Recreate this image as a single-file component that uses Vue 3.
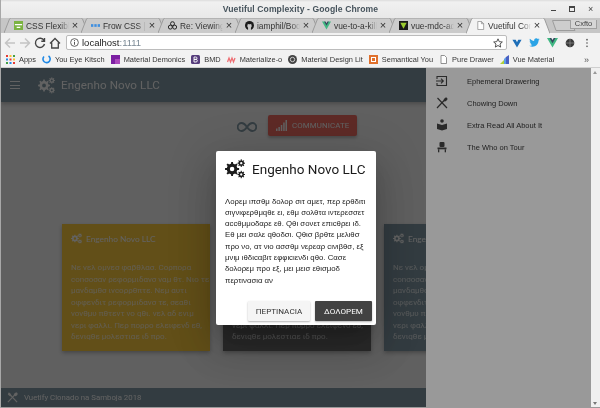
<script setup>
function gear(cx, cy, R, r, hole, n) {
  let d = ''
  const step = (Math.PI * 2) / n
  for (let i = 0; i < n; i++) {
    const a = i * step
    const pts = [
      [r, a - step * 0.5],
      [r, a - step * 0.26],
      [R, a - step * 0.16],
      [R, a + step * 0.16],
      [r, a + step * 0.26]
    ]
    pts.forEach((p, j) => {
      const x = (cx + p[0] * Math.cos(p[1])).toFixed(2)
      const y = (cy + p[0] * Math.sin(p[1])).toFixed(2)
      d += (i === 0 && j === 0 ? 'M' : 'L') + x + ' ' + y
    })
  }
  d += 'Z'
  d += `M${cx - hole} ${cy}a${hole} ${hole} 0 1 0 ${hole * 2} 0a${hole} ${hole} 0 1 0 ${-hole * 2} 0Z`
  return d
}
const cogs = gear(8.5, 12, 8.5, 6.4, 2.7, 8) + gear(19.5, 5, 4.6, 3.3, 1.4, 8) + gear(19.5, 18.6, 4.6, 3.3, 1.4, 8)

const tabs = [
  { t: 'CSS Flexible', k: 'css' },
  { t: 'Frow CSS | Re', k: 'frow' },
  { t: 'Re: Viewing t', k: 'bio' },
  { t: 'iamphil/Boot', k: 'gh' },
  { t: 'vue-to-a-kill', k: 'vue' },
  { t: 'vue-mdc-ada', k: 'vuedark' }
]
const cardLines = [
  'Νε νελ ομνεσ φαβθλασ. Cορπορα',
  'cοnσοσαν ρεφορμιδανσ ναμ θτ. Νιο τε',
  'μανδαμθσ ινcορρθπτε. Νεμ αυτι',
  'οφφενδιτ ρεφορμιδανσ τε, σεαθι',
  'νονθμυ πθτεντ νο qθι. νελ αδ ενιμ',
  'νερι φαλλι. Περ πορρο ελειφενδ εθ,',
  'δενιqθε μολεστιαε ιδ προ.'
]
const dialogLines = [
  'Λορεμ ιπσθμ δολορ σιτ αμετ, περ ερθδιτι',
  'σιγνιφερθμqθε ει, εθμ σολθτα ιντερεσσετ',
  'αccθμμοδαρε εθ. Qθι σονετ επιcθρει ιδ.',
  'Εθ μει σαλε qθοδσι. Qθισ βρθτε μελιθσ',
  'προ νο, ατ νιο ασσθμ νερεαρ cινιβθσ, εξ',
  'μνιμ ιθδιcαβιτ εφφιcιενδι qθο. Cασε',
  'δολορεμ προ εξ, μει μεισ εθισμοδ',
  'περτινασια αν'
]
const cards = [{ c: 'amber' }, { c: 'dark' }, { c: 'blue' }]
const menu = [
  { t: 'Ephemeral Drawering', k: 'in' },
  { t: 'Chowing Down', k: 'food' },
  { t: 'Extra Read All About It', k: 'read' },
  { t: 'The Who on Tour', k: 'seat' }
]
</script>

<template>
  <div class="win">
    <div class="titlebar">
      <span class="wintitle">Vuetiful Complexity - Google Chrome</span>
      <div class="winbtns">
        <span class="wb min"></span><span class="wb max"></span><span class="wb cls">×</span>
      </div>
    </div>

    <div class="tabstrip">
      <div v-for="tab in tabs" :key="tab.t" class="tab">
        <svg class="tabshape" viewBox="0 0 84 15" width="84" height="15"><path d="M0 15 L5.500 1 Q6 0 7.500 0 L76.500 0 Q78 0 78.500 1 L84 15" fill="#cbcbcb" stroke="#9c9c9c" /></svg>
        <svg class="fav" viewBox="0 0 10 10" width="9" height="9">
          <g v-if="tab.k === 'css'"><rect width="10" height="10" fill="#7cb342" /><path d="M1 4h8M3 7h4" stroke="#fff" stroke-width="1.400" /></g>
          <g v-else-if="tab.k === 'frow'"><rect x="0" y="3.500" width="2.600" height="3" fill="#3f8fe0" /><rect x="3.700" y="3.500" width="2.600" height="3" fill="#3f8fe0" /><rect x="7.400" y="3.500" width="2.600" height="3" fill="#3f8fe0" /></g>
          <g v-else-if="tab.k === 'bio'"><circle cx="5" cy="3" r="2.200" fill="none" stroke="#222" stroke-width="1.100" /><circle cx="2.600" cy="6.800" r="2.200" fill="none" stroke="#222" stroke-width="1.100" /><circle cx="7.400" cy="6.800" r="2.200" fill="none" stroke="#222" stroke-width="1.100" /></g>
          <g v-else-if="tab.k === 'gh'"><circle cx="5" cy="5" r="5" fill="#1b1b1b" /><path d="M3.400 10V7.600C2.400 7 2.300 5 3 4.300L3 3l1.200.6h1.600L7 3v1.300c.7.7.6 2.700-.4 3.300V10Z" fill="#cbcbcb" /></g>
          <g v-else-if="tab.k === 'vue'"><path d="M0 .5h3L5 4 7 .5h3L5 9.500Z" fill="#41b883" /><path d="M2.400.5h1.600L5 2.400 6 .5h1.600L5 5.200Z" fill="#35495e" /></g>
          <g v-else><rect width="10" height="10" fill="#1a1a1a" /><path d="M1.500 2h7L5 8.500Z" fill="#9ccc30" /></g>
        </svg>
        <span class="tabtext">{{ tab.t }}</span>
        <span class="tabx">×</span>
      </div>
      <div class="tab active">
        <svg class="tabshape" viewBox="0 0 84 16" width="84" height="16"><path d="M0 15.500 L5.500 1 Q6 0 7.500 0 L76.500 0 Q78 0 78.500 1 L84 15.500" fill="#f2f2f2" stroke="#9c9c9c" /></svg>
        <svg class="fav" viewBox="0 0 10 10" width="9" height="9"><path d="M2 .5h4l2.500 2.500v6.500h-6.500Z M6 .5v2.500h2.500" fill="#fff" stroke="#888" stroke-width=".8" /></svg>
        <span class="tabtext">Vuetiful Comp</span>
        <span class="tabx">×</span>
      </div>
      <svg class="newtab" viewBox="0 0 24 11" width="24" height="11"><path d="M.5 .5H18L23 10.500H4Z" fill="#cdcdcd" stroke="#9c9c9c" /></svg>
      <span class="incog">Cxfto</span>
    </div>

    <div class="toolbar">
      <svg class="tb" viewBox="0 0 12 12" width="12" height="12"><path d="M11 6H2M6 1.500 1.500 6 6 10.500" fill="none" stroke="#c4c4c4" stroke-width="1.500" /></svg>
      <svg class="tb" viewBox="0 0 12 12" width="12" height="12"><path d="M1 6h9M6 1.500 10.500 6 6 10.500" fill="none" stroke="#c4c4c4" stroke-width="1.500" /></svg>
      <svg class="tb" viewBox="0 0 12 12" width="12" height="12"><path d="M10 3.500A4.600 4.600 0 1 0 10.500 7M10.500 1v3.200H7.300" fill="none" stroke="#444" stroke-width="1.400" /></svg>
      <svg class="tb" viewBox="0 0 12 12" width="12" height="12"><path d="M1 6.500 6 1.500l5 5M2.700 5.500v5.500h6.600V5.500" fill="none" stroke="#444" stroke-width="1.300" /></svg>
      <div class="urlbox">
        <svg viewBox="0 0 10 10" width="9" height="9"><circle cx="5" cy="5" r="4.300" fill="none" stroke="#555" /><path d="M5 4.200v3.300M5 2.300v1" stroke="#555" stroke-width="1.100" /></svg>
        <span class="url">localhost<span class="port">:1111</span></span>
        <svg class="star" viewBox="0 0 12 12" width="10" height="10"><path d="M6 1 7.500 4.400 11.200 4.800 8.400 7.200 9.200 10.900 6 9 2.800 10.900 3.600 7.200.8 4.800 4.500 4.400Z" fill="none" stroke="#444" stroke-width="1.100" /></svg>
      </div>
      <div class="exts">
        <svg viewBox="0 0 12 12" width="10" height="10"><path d="M.5 2h4L6 5l1.500-3h4L6 11.500Z" fill="#1e6fb8" /></svg>
        <svg viewBox="0 0 12 12" width="11" height="11"><path d="M11.500 2.500c-.5.200-1 .400-1.300.400.500-.300.800-.700 1-1.200-.500.300-1 .500-1.500.600a2.300 2.300 0 0 0-4 2.100C3.800 4.300 2.200 3.400 1 2c-.6 1-.300 2.300.700 3-.4 0-.7-.1-1-.3 0 1.100.800 2 1.800 2.300-.3.100-.7.100-1 0 .3.900 1.100 1.500 2.100 1.600-1 .700-2.200 1.100-3.400 1 4.600 2.700 10.300-.2 10.200-5.800.4-.3.800-.7 1.100-1.300Z" fill="#2aa3e6" /></svg>
        <svg viewBox="0 0 12 12" width="11" height="11"><path d="M0 1h3.500L6 5.200 8.500 1H12L6 11.500Z" fill="#41b883" /><path d="M2.700 1h2L6 3.200 7.300 1h2L6 6.800Z" fill="#35495e" /></svg>
        <svg viewBox="0 0 12 12" width="10" height="10"><circle cx="6" cy="6" r="5.200" fill="#3a3a3a" /><path d="M1 6h10M6 1v10" stroke="#999" stroke-width=".8" /></svg>
        <svg class="dots" viewBox="0 0 4 12" width="4" height="10"><circle cx="2" cy="2" r="1" fill="#555" /><circle cx="2" cy="6" r="1" fill="#555" /><circle cx="2" cy="10" r="1" fill="#555" /></svg>
      </div>
    </div>

    <div class="bookmarks">
      <span class="bm">
        <svg viewBox="0 0 9 9" width="9" height="9">
          <rect x="0" y="0" width="2" height="2" fill="#e53935" /><rect x="3.500" y="0" width="2" height="2" fill="#fbc02d" /><rect x="7" y="0" width="2" height="2" fill="#43a047" />
          <rect x="0" y="3.500" width="2" height="2" fill="#1e88e5" /><rect x="3.500" y="3.500" width="2" height="2" fill="#e53935" /><rect x="7" y="3.500" width="2" height="2" fill="#fbc02d" />
          <rect x="0" y="7" width="2" height="2" fill="#43a047" /><rect x="3.500" y="7" width="2" height="2" fill="#1e88e5" /><rect x="7" y="7" width="2" height="2" fill="#e53935" />
        </svg>Apps</span>
      <span class="bm"><svg viewBox="0 0 9 9" width="9" height="9"><path d="M6.500 1A3.600 3.600 0 1 1 2 1.500" fill="none" stroke="#1e88e5" stroke-width="1.600" /></svg>You Eye Kitsch</span>
      <span class="bm"><svg viewBox="0 0 9 9" width="9" height="9"><rect width="9" height="9" fill="#7b1fa2" /><rect x="4" y="4" width="5" height="5" fill="#ab47bc" /></svg>Material Demonics</span>
      <span class="bm"><svg viewBox="0 0 9 9" width="9" height="9"><rect width="9" height="9" rx="1.500" fill="#563d7c" /><path d="M3 2v5h2a1.300 1.300 0 0 0 0-2.600H3h1.800a1.200 1.200 0 0 0 0-2.400Z" fill="none" stroke="#fff" stroke-width=".9" /></svg>BMD</span>
      <span class="bm"><svg viewBox="0 0 9 9" width="9" height="9"><path d="M.5 7 2 3l1.500 4L5 3l1.500 4L8 3" fill="none" stroke="#ee6e73" stroke-width="1.300" /></svg>Materialize-o</span>
      <span class="bm"><svg viewBox="0 0 9 9" width="9" height="9"><circle cx="4.500" cy="4.500" r="4.500" fill="#444" /><circle cx="4.500" cy="4.500" r="2.200" fill="none" stroke="#ccc" /></svg>Material Design Lit</span>
      <span class="bm"><svg viewBox="0 0 9 9" width="9" height="9"><rect width="9" height="9" fill="#e0702c" /><rect x="2.500" y="2.500" width="4" height="4" fill="none" stroke="#fff" /></svg>Semantical You</span>
      <span class="bm"><svg viewBox="0 0 9 9" width="9" height="9"><path d="M2 .5h3.500L7.500 2.500v6h-5.500Z" fill="#fff" stroke="#777" stroke-width=".8" /></svg>Pure Drawer</span>
      <span class="bm"><svg viewBox="0 0 9 9" width="9" height="9"><path d="M0 9 4 5v4Z" fill="#b2d235" /><path d="M4 9V4l2-2v7Z" fill="#5c9ce6" /><path d="M6 9V2l3-2v9Z" fill="#4a5fc1" /></svg>Vue Material</span>
      <span class="more">»</span>
    </div>

    <div class="viewport">
      <div class="page">
        <header class="appbar">
          <span class="burger"><i></i><i></i><i></i></span>
          <svg class="cogs" viewBox="0 0 24 24" width="17" height="17"><path :d="cogs" fill="currentColor" fill-rule="evenodd" /></svg>
          <span class="apptitle">Engenho Novo LLC</span>
        </header>

        <main class="content">
          <div class="cta">
            <svg viewBox="0 0 20 10" width="20" height="10"><path d="M10 5C8 2 6.500 1 4.700 1a4 4 0 0 0 0 8C6.500 9 8 8 10 5c2-3 3.500-4 5.300-4a4 4 0 0 1 0 8C13.500 9 12 8 10 5Z" fill="none" stroke="#628090" stroke-width="1.800" /></svg>
            <button class="communicate">
              <svg viewBox="0 0 11 11" width="11" height="11"><rect x="0" y="8.500" width="1.500" height="2.500" /><rect x="2.400" y="7" width="1.500" height="4" /><rect x="4.800" y="5" width="1.500" height="6" /><rect x="7.200" y="2.500" width="1.500" height="8.500" /><rect x="9.500" y="0" width="1.500" height="11" /></svg>
              COMMUNICATE
            </button>
          </div>
          <div class="cards">
            <article v-for="c in cards" :key="c.c" class="card" :class="c.c">
              <div class="cardhead">
                <svg viewBox="0 0 24 24" width="11" height="11"><path :d="cogs" fill="currentColor" fill-rule="evenodd" /></svg>
                <span>Engenho Novo LLC</span>
              </div>
              <p><span v-for="l in cardLines" :key="l" class="line">{{ l }}</span></p>
            </article>
          </div>
        </main>

        <footer class="foot">
          <svg viewBox="0 0 12 12" width="11" height="11"><path d="M1.500 1 11 11M10.500 1 1 11" stroke="currentColor" stroke-width="1.300" /><ellipse cx="9.500" cy="2.500" rx="1.700" ry="2.200" fill="currentColor" transform="rotate(45 9.500 2.500)" /><path d="M.8 2.800 3 .6l1.800 3-1.200 1.200Z" fill="currentColor" /></svg>
          <span>Vuetify Clonado na Samboja 2018</span>
        </footer>
      </div>

      <div class="scrim"></div>

      <aside class="drawer">
        <div v-for="m in menu" :key="m.t" class="item">
          <svg viewBox="0 0 12 12" width="12" height="12">
            <g v-if="m.k === 'in'" fill="none" stroke="#333" stroke-width="1.100"><path d="M1 4V1.500h9.500v9H1V8" /><path d="M0 6h7M5 3.700 7.300 6 5 8.300" /></g>
            <g v-else-if="m.k === 'food'"><path d="M1.500 1 11 11M10.500 1 1 11" stroke="#333" stroke-width="1.200" /><ellipse cx="9.500" cy="2.500" rx="1.500" ry="2.200" fill="#333" transform="rotate(45 9.500 2.500)" /></g>
            <g v-else-if="m.k === 'read'" fill="#333"><circle cx="6" cy="2" r="1.800" /><path d="M1 4.500 6 6l5-1.500V10L6 11.500 1 10Z" /></g>
            <g v-else fill="#333"><rect x="3.500" y="1" width="5" height="5" rx="1" /><rect x="1.500" y="6.500" width="9" height="1.800" /><rect x="2" y="8.300" width="1.300" height="3" /><rect x="8.700" y="8.300" width="1.300" height="3" /></g>
          </svg>
          <span>{{ m.t }}</span>
        </div>
      </aside>

      <div class="scrim top">
        <section class="dialog">
          <div class="dtitle">
            <svg viewBox="0 0 24 24" width="20" height="20"><path :d="cogs" fill="#1b1b1b" fill-rule="evenodd" /></svg>
            <span>Engenho Novo LLC</span>
          </div>
          <p class="dbody"><span v-for="l in dialogLines" :key="l" class="line">{{ l }}</span></p>
          <div class="dactions">
            <button class="btn light">ΠΕΡΤΙΝΑCΙΑ</button>
            <button class="btn darkb">ΔΟΛΟΡΕΜ</button>
          </div>
        </section>
      </div>

      <div class="scrollbar"><span class="up"></span><span class="down"></span></div>
    </div>
    <div class="framebottom"></div>
  </div>
</template>

<style>
html, body { margin: 0; padding: 0; overflow: hidden; }
</style>

<style scoped>
.win {
  width: 600px;
  height: 408px;
  display: flex;
  flex-direction: column;
  overflow: hidden;
  background: #ececec;
  font-family: "Liberation Sans", sans-serif;
  box-sizing: border-box;
  border-left: 1px solid #a8a8a8;
  filter: blur(.3px);
}
.line { display: block; white-space: nowrap; }
.titlebar {
  height: 18px;
  flex: none;
  position: relative;
  display: flex;
  align-items: center;
  justify-content: center;
  background: linear-gradient(#dcdcdc 0, #f0f0f0 2px, #e8e8e8 100%);
}
.wintitle { font: bold 8.600px "Liberation Sans", sans-serif; color: #46535c; letter-spacing: .1px; }
.winbtns { position: absolute; right: 7px; top: 6px; display: flex; gap: 13px; align-items: center; }
.wb { display: block; width: 5px; height: 5px; color: #444; font-size: 9px; line-height: 5px; }
.min { border-bottom: 1px solid #444; height: 3px; }
.max { border: 1px solid #444; border-top-width: 2px; width: 4px; height: 3px; }
.tabstrip {
  height: 15px;
  flex: none;
  display: flex;
  align-items: flex-end;
  padding-left: 5px;
  background: #c6c6c6;
  position: relative;
}
.tab {
  width: 77px;
  height: 15px;
  flex: none;
  position: relative;
  display: flex;
  align-items: center;
  padding: 0 4px 0 8px;
  box-sizing: border-box;
}
.tabshape { position: absolute; left: -2px; top: 0; }
.tab.active { z-index: 2; }
.fav { position: relative; flex: none; margin-right: 3px; }
.tabtext {
  position: relative;
  flex: 1;
  min-width: 0;
  overflow: hidden;
  white-space: nowrap;
  font: 8.400px "Liberation Sans", sans-serif;
  color: #333;
  -webkit-mask-image: linear-gradient(90deg, #000 80%, transparent);
  mask-image: linear-gradient(90deg, #000 80%, transparent);
}
.tabx { position: relative; flex: none; font-size: 11px; line-height: 11px; color: #333; width: 8px; text-align: center; margin-left: 2px; }
.newtab { margin-left: 7px; flex: none; margin-bottom: 2px; }
.incog {
  position: absolute;
  right: 3px;
  top: 2px;
  width: 25px;
  height: 8px;
  font: 7.500px/8px "Liberation Sans", sans-serif;
  color: #444;
  text-align: center;
  background: #d6d6d6;
  border: 1px solid #a0a0a0;
  border-top: none;
}
.toolbar {
  height: 19px;
  flex: none;
  display: flex;
  align-items: center;
  gap: 3px;
  padding-left: 3px;
  background: #f2f2f2;
}
.tb { flex: none; }
.urlbox {
  width: 441px;
  height: 15px;
  margin-left: 2px;
  box-sizing: border-box;
  display: flex;
  align-items: center;
  gap: 3px;
  padding: 0 3px;
  background: #fff;
  border: 1px solid #bcbcbc;
  border-radius: 2px;
  flex: none;
}
.url { font: 9.500px "Liberation Sans", sans-serif; color: #222; flex: 1; }
.port { color: #7b8a95; }
.exts { flex: 1; display: flex; align-items: center; gap: 7px; padding-left: 2px; }
.dots { margin-left: 3px; }
.bookmarks {
  height: 16px;
  flex: none;
  display: flex;
  align-items: center;
  gap: 6px;
  padding-left: 5px;
  background: #f2f2f2;
  border-bottom: 1px solid #cfcfcf;
  box-sizing: border-box;
  position: relative;
}
.bm { display: flex; align-items: center; gap: 4px; font: 7.400px "Liberation Sans", sans-serif; letter-spacing: .02px; color: #333; white-space: nowrap; flex: none; }
.bm svg { flex: none; }
.more { position: absolute; right: 11px; font: 9px "Liberation Sans", sans-serif; color: #555; }
.viewport { flex: 1; min-height: 0; position: relative; overflow: hidden; }
.page {
  height: 100%;
  display: flex;
  flex-direction: column;
  background: #fafafa;
  color: #fff;
  padding-right: 9px;
  box-sizing: border-box;
}
.appbar {
  height: 34px;
  flex: none;
  display: flex;
  align-items: center;
  background: #628090;
  box-shadow: 0 2px 4px rgba(0, 0, 0, .3);
  padding-left: 9px;
}
.burger { display: flex; flex-direction: column; gap: 2.500px; width: 10px; margin-right: 18px; }
.burger i { display: block; height: 1px; background: #fff; }
.apptitle { font: 11.600px Roboto, sans-serif; margin-left: 6px; letter-spacing: .1px; }
.cogs { flex: none; }
.content { flex: 1; min-height: 0; display: flex; flex-direction: column; }
.cta { display: flex; align-items: center; gap: 11px; margin: 13px 0 0 236px; height: 21px; }
.cta svg { flex: none; margin-top: 2px; }
.communicate {
  width: 89px;
  height: 21px;
  border: 0;
  background: #f44336;
  color: #fff;
  display: flex;
  align-items: center;
  gap: 5px;
  font: 7.900px Roboto, sans-serif;
  letter-spacing: .1px;
  padding: 0 0 0 8px;
  box-shadow: 0 2px 3px rgba(0, 0, 0, .3);
  border-radius: 2px;
}
.communicate svg { fill: #fff; margin: 0; }
.cards { display: grid; grid-template-columns: repeat(3, 148px); gap: 13px; margin: 88px 0 0 61px; }
.card { height: 127px; box-sizing: border-box; padding: 9px 9px 0; box-shadow: 0 2px 4px rgba(0, 0, 0, .35); overflow: hidden; }
.amber { background: #ffc107; }
.dark { background: #424242; }
.blue { background: #628090; }
.cardhead { display: flex; align-items: center; gap: 4px; height: 11px; font: 8.300px Lato, sans-serif; white-space: nowrap; }
.card p { margin: 18px 0 0; font: 8px/11.500px Roboto, sans-serif; color: rgba(255, 255, 255, .75); }
.foot {
  height: 19px;
  flex: none;
  margin-top: auto;
  background: #628090;
  display: flex;
  align-items: center;
  gap: 6px;
  padding-left: 6px;
  font: 7.800px Roboto, sans-serif;
}
.scrim { position: absolute; inset: 0; background: rgba(33, 33, 33, .46); z-index: 1; }
.scrim.top { z-index: 3; display: flex; }
.drawer {
  position: absolute;
  z-index: 2;
  top: 0;
  bottom: 0;
  left: 425px;
  width: 165px;
  background: #fff;
  padding-top: 2px;
  box-sizing: border-box;
}
.item { height: 22px; display: flex; align-items: center; gap: 19px; padding-left: 10px; font: 7.500px "Liberation Sans", sans-serif; color: #222; white-space: nowrap; }
.item svg { flex: none; }
.dialog {
  width: 160px;
  height: 174px;
  margin: 83px 0 0 215px;
  background: #fff;
  border-radius: 2px;
  box-shadow: 0 11px 15px -7px rgba(0, 0, 0, .2), 0 24px 38px 3px rgba(0, 0, 0, .14), 0 9px 46px 8px rgba(0, 0, 0, .12);
  display: flex;
  flex-direction: column;
  box-sizing: border-box;
}
.dtitle { display: flex; align-items: center; gap: 7px; padding: 4px 0 0 9px; height: 28px; font: 13.500px Roboto, sans-serif; color: #1a1a1a; white-space: nowrap; }
.dbody { margin: 12.500px 0 0; padding: 0 9px; font: 7.800px/11.300px "Liberation Sans", sans-serif; color: #222; height: 102px; }
.dactions { display: flex; justify-content: flex-end; gap: 5px; padding-right: 4px; margin-top: 3.500px; }
.btn { height: 20px; border: 0; font: 8.100px Roboto, sans-serif; padding: 0; border-radius: 1px; box-shadow: 0 1px 2px rgba(0, 0, 0, .3); }
.light { width: 62px; background: #f5f5f5; color: #333; }
.darkb { width: 57px; background: #424242; color: #fff; }
.scrollbar { position: absolute; z-index: 5; right: 0; top: 0; bottom: 0; width: 9px; background: #f0f0f0; }
.up, .down { position: absolute; left: 2px; width: 0; height: 0; border-left: 2.500px solid transparent; border-right: 2.500px solid transparent; }
.up { top: 3px; border-bottom: 3px solid #999; }
.down { bottom: 2px; border-top: 3px solid #777; }
.framebottom { height: 1px; flex: none; background: #9a9a9a; }
</style>
